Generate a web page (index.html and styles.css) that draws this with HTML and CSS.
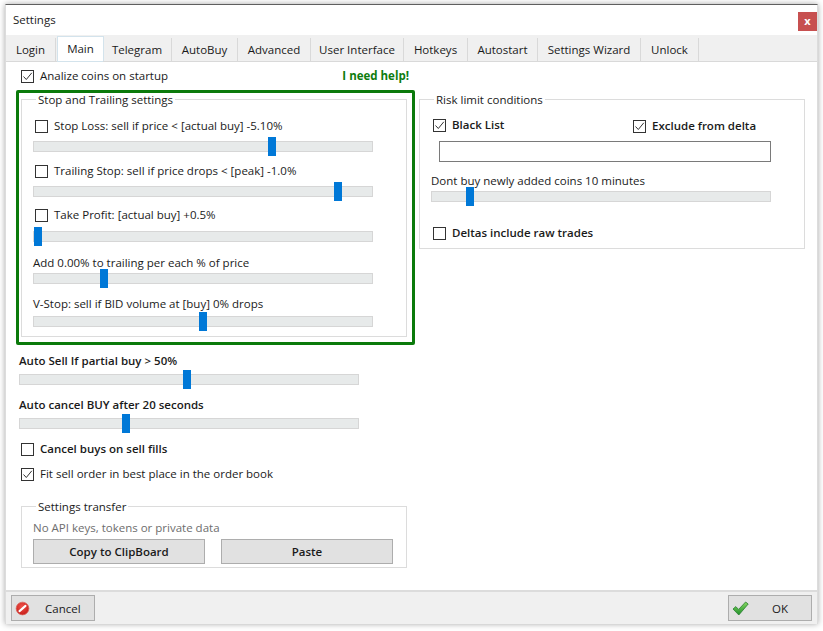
FILE: index.html
```html
<!DOCTYPE html>
<html lang="en">
<head>
<meta charset="utf-8">
<title>Settings</title>
<link rel="stylesheet" href="styles.css">
</head>
<body>
<div class="window">
  <header class="titlebar">
    <span class="title">Settings</span>
    <span class="close">x</span>
  </header>
  <nav class="tabs">
    <span class="tab t-login">Login</span>
    <span class="tab t-main active">Main</span>
    <span class="tab t-telegram">Telegram</span>
    <span class="tab t-autobuy">AutoBuy</span>
    <span class="tab t-advanced">Advanced</span>
    <span class="tab t-ui">User Interface</span>
    <span class="tab t-hotkeys">Hotkeys</span>
    <span class="tab t-autostart">Autostart</span>
    <span class="tab t-wizard">Settings Wizard</span>
    <span class="tab t-unlock">Unlock</span>
  </nav>
  <main class="content">
    <section class="col-left">
      <div class="top-row">
        <label class="row"><span class="cb"><svg viewBox="0 0 11 11"><path d="M1.5 5.5 L4.3 8.5 L9.8 1.8" fill="none" stroke="#333" stroke-width="1"/></svg></span>Analize coins on startup</label>
        <span class="help">I need help!</span>
      </div>
      <div class="green-box">
        <fieldset class="group">
          <legend>Stop and Trailing settings</legend>
          <label class="row check m-9"><span class="cb"></span>Stop Loss: sell if price &lt; [actual buy] -5.10%</label>
          <div class="slider m-5"><span class="thumb" style="left:234px"></span></div>
          <label class="row check m-9"><span class="cb"></span>Trailing Stop: sell if price drops &lt; [peak] -1.0%</label>
          <div class="slider m-5"><span class="thumb" style="left:300px"></span></div>
          <label class="row check m-8"><span class="cb"></span>Take Profit: [actual buy] +0.5%</label>
          <div class="slider m-6"><span class="thumb" style="left:0"></span></div>
          <div class="row m-11">Add 0.00% to trailing per each % of price</div>
          <div class="slider"><span class="thumb" style="left:66px"></span></div>
          <div class="row m-10">V-Stop: sell if BID volume at [buy] 0% drops</div>
          <div class="slider m-2"><span class="thumb" style="left:165px"></span></div>
        </fieldset>
      </div>
      <div class="below">
        <div class="row strong m-6">Auto Sell If partial buy &gt; 50%</div>
        <div class="slider m-3"><span class="thumb" style="left:163px"></span></div>
        <div class="row strong m-10">Auto cancel BUY after 20 seconds</div>
        <div class="slider m-3"><span class="thumb" style="left:102px"></span></div>
        <label class="row check strong m-10"><span class="cb"></span>Cancel buys on sell fills</label>
        <label class="row check m-5"><span class="cb"><svg viewBox="0 0 11 11"><path d="M1.5 5.5 L4.3 8.5 L9.8 1.8" fill="none" stroke="#333" stroke-width="1"/></svg></span>Fit sell order in best place in the order book</label>
      </div>
      <fieldset class="group transfer">
        <legend>Settings transfer</legend>
        <div class="row note">No API keys, tokens or private data</div>
        <div class="transfer-buttons">
          <button class="btn">Copy to ClipBoard</button>
          <button class="btn">Paste</button>
        </div>
      </fieldset>
    </section>
    <section class="col-right">
      <fieldset class="group risk">
        <legend>Risk limit conditions</legend>
        <div class="risk-top">
          <label class="row check strong blacklist"><span class="cb"><svg viewBox="0 0 11 11"><path d="M1.5 5.5 L4.3 8.5 L9.8 1.8" fill="none" stroke="#333" stroke-width="1"/></svg></span>Black List</label>
          <label class="row strong exclude"><span class="cb"><svg viewBox="0 0 11 11"><path d="M1.5 5.5 L4.3 8.5 L9.8 1.8" fill="none" stroke="#333" stroke-width="1"/></svg></span>Exclude from delta</label>
        </div>
        <input class="text-input" type="text" aria-label="Black list">
        <div class="row m-9">Dont buy newly added coins 10 minutes</div>
        <div class="slider"><span class="thumb" style="left:34px"></span></div>
        <label class="row check strong m-21"><span class="cb"></span>Deltas include raw trades</label>
      </fieldset>
    </section>
  </main>
  <footer class="footer">
    <button class="btn footer-btn">
      <svg class="icon" viewBox="0 0 16 16"><defs><radialGradient id="r" cx="45%" cy="35%" r="70%"><stop offset="0" stop-color="#f0524a"/><stop offset="1" stop-color="#c41a16"/></radialGradient></defs><circle cx="8" cy="8" r="6.8" fill="url(#r)" stroke="#d8645c" stroke-width="0.8"/><path d="M4.8 10.8 L11.2 5.2" stroke="#fff" stroke-width="2.2" stroke-linecap="round"/></svg>
      <span class="footer-label">Cancel</span>
    </button>
    <button class="btn footer-btn ok">
      <svg class="icon" viewBox="0 0 17 15"><defs><linearGradient id="g" x1="0" y1="0" x2="0" y2="1"><stop offset="0" stop-color="#86d860"/><stop offset="1" stop-color="#1f8f2c"/></linearGradient></defs><path d="M1 8 L3.8 5.6 L6.6 8.4 L13.6 1 L16.2 3 L6.8 14 Z" fill="url(#g)" stroke="#2a7f30" stroke-width="0.8" stroke-linejoin="round"/></svg>
      <span class="footer-label">OK</span>
    </button>
  </footer>
</div>
</body>
</html>
```
FILE: styles.css
```css
* { box-sizing: border-box; }
html, body { margin: 0; height: 100%; overflow: hidden; background: #fff; }
body { font: 11.5px/16px "Open Sans", "Noto Sans", sans-serif; color: #1a1a1a; }
.window {
  width: 813px; height: 620px; margin: 4px 5px 0;
  display: flex; flex-direction: column;
  background: #fff;
  border: 1px solid #dcdcdc; border-top-color: #5f5f5f; border-bottom: 0;
  box-shadow: 0 0 6px rgba(0,0,0,.35);
}
.titlebar { height: 30px; display: flex; align-items: center; justify-content: space-between; padding: 2px 0 0 7px; flex: none; }
.title { padding-bottom: 2px; }
.close { width: 19px; height: 19px; background: #c75050; color: #fff; font-size: 11px; font-weight: 700; line-height: 17px; text-align: center; }
.tabs { height: 27px; background: #f0f0f0; border-bottom: 1px solid #d9d9d9; display: flex; align-items: flex-end; flex: none; }
.tab { height: 24px; margin-bottom: -1px; padding-top: 1px; border: 1px solid #d9d9d9; border-width: 0 1px 1px 0; display: flex; align-items: center; justify-content: center; white-space: nowrap; }
.t-login { width: 50px; }
.t-main { width: 47px; }
.t-telegram { width: 69px; }
.t-autobuy { width: 66px; }
.t-advanced { width: 73px; }
.t-ui { width: 93px; }
.t-hotkeys { width: 64px; }
.t-autostart { width: 70px; }
.t-wizard { width: 103px; }
.t-unlock { width: 58px; }
.tab.active { height: 26px; padding-top: 0; background: #fff; border: 1px solid #d3e3ec; margin-left: 1px; margin-right: -1px; }
.content { flex: 1; display: flex; align-items: flex-start; gap: 4px; padding: 4px 0 0 10px; }
.col-left { width: 399px; }
.col-right { width: 386px; margin-top: 27px; }
.row { height: 20px; display: flex; align-items: center; white-space: nowrap; }
.cb { width: 13px; height: 13px; border: 1px solid #333; margin-right: 6px; flex: none; display: flex; background: #fff; }
.cb svg { width: 11px; height: 11px; display: block; }
.top-row { display: flex; justify-content: space-between; align-items: center; padding: 0 6px 0 5px; }
.help { color: #0e7c0e; font-weight: 700; }
.green-box { margin-top: 4px; border: 3px solid #0b7a0b; border-radius: 2px; padding: 0 5px 5px 2px; }
.group { margin: 0; min-width: 0; border: 1px solid #dcdcdc; padding: 1px 0 9px 11px; }
.group legend { margin-left: 3px; padding: 0 2px; line-height: 13px; height: 13px; }
.check { padding-left: 2px; }
.strong { font-weight: 600; }
.slider { width: 340px; height: 11px; position: relative; background: #e7eaea; border: 1px solid #d6d6d6; }
.thumb { position: absolute; top: -5px; width: 8px; height: 19px; background: #0078d7; }
.m-2 { margin-top: 2px; } .m-3 { margin-top: 3px; } .m-5 { margin-top: 5px; } .m-6 { margin-top: 6px; }
.m-8 { margin-top: 8px; } .m-9 { margin-top: 9px; } .m-10 { margin-top: 10px; } .m-11 { margin-top: 11px; } .m-21 { margin-top: 21px; }
.below { padding-left: 3px; }
.transfer { margin: 16px 8px 0 5px; padding-bottom: 3px; }
.note { color: #6d6d6d; margin-top: 4px; }
.transfer-buttons { display: flex; gap: 16px; margin-top: 1px; }
.btn { width: 172px; height: 25px; padding: 0; font: 600 11.5px "Open Sans", "Noto Sans", sans-serif; color: #1a1a1a; background: #e1e1e1; border: 1px solid #adadad; }
.risk { padding-bottom: 5px; }
.risk-top { display: flex; margin-top: 8px; }
.blacklist { width: 200px; }
.exclude { margin: 1px 0 -1px; padding-left: 2px; }
.text-input { display: block; width: 332px; height: 21px; margin: 6px 0 0 8px; border: 1px solid #7a7a7a; padding: 0 3px; background: #fff; border-radius: 0; outline: 0; }
.footer { height: 34px; flex: none; background: #f0f0f0; border-top: 2px solid #dcdcdc; padding: 3px 5px 0; display: flex; justify-content: space-between; align-items: flex-start; }
.footer-btn { width: 84px; height: 26px; display: flex; align-items: center; padding-left: 3px; font-weight: 400; }
.footer-btn .icon { width: 15px; height: 15px; flex: none; }
.footer-label { margin-left: 15px; }
.ok .icon { width: 17px; height: 15px; }
.ok .footer-label { margin-left: 23px; }
```
